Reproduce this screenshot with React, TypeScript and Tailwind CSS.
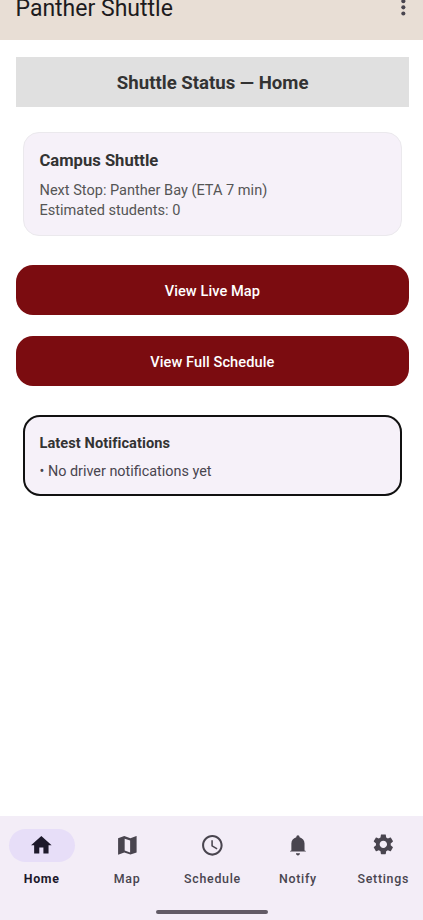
const items = [
  { label: "Home", d: "M10 20v-6h4v6h5v-8h3L12 3 2 12h3v8z", icon: "size-[24.7px]" },
  {
    label: "Map",
    d: "M20.8 2.9L15 5.1 9 3 3 5V21.1L9 18.9l6 2.1 6-2.1V2.9zM14.7 19l-5.3-1.9V5.5l5.3 1.8V19z",
    icon: "size-[24.7px]",
  },
  {
    label: "Schedule",
    d: "M11.99 2C6.47 2 2 6.48 2 12s4.47 10 9.99 10C17.52 22 22 17.52 22 12S17.52 2 11.99 2zM12 20c-4.42 0-8-3.58-8-8s3.58-8 8-8 8 3.58 8 8-3.58 8-8 8zM12.5 7H11v6l5.25 3.15.75-1.23-4.5-2.67z",
    icon: "size-[24.7px]",
  },
  {
    label: "Notify",
    d: "M12 22c1.1 0 2-.9 2-2h-4c0 1.1.9 2 2 2zM18.4 17.2V10.5c0-3-2-5.2-4.8-6.1C13.5 3.2 13 2.4 12 2.4s-1.5.8-1.6 2C7.6 5.3 5.6 7.5 5.6 10.5v6.7L4.3 17.8v.5h15.4v-.5z",
    icon: "size-[24.7px] -translate-x-[0.4px] -translate-y-[0.2px]",
  },
  {
    label: "Settings",
    d: "M19.14 12.94c.04-.3.06-.61.06-.94 0-.32-.02-.64-.07-.94l2.03-1.58c.18-.14.23-.41.12-.61l-1.92-3.32c-.12-.22-.37-.29-.59-.22l-2.39.96c-.5-.38-1.03-.7-1.62-.94l-.36-2.54c-.04-.24-.24-.41-.48-.41h-3.84c-.24 0-.43.17-.47.41l-.36 2.54c-.59.24-1.13.57-1.62.94l-2.39-.96c-.22-.08-.47 0-.59.22L2.74 8.87c-.12.21-.08.47.12.61l2.03 1.58c-.05.3-.09.63-.09.94s.02.64.07.94l-2.03 1.58c-.18.14-.23.41-.12.61l1.92 3.32c.12.22.37.29.59.22l2.39-.96c.5.38 1.03.7 1.62.94l.36 2.54c.05.24.24.41.48.41h3.84c.24 0 .44-.17.47-.41l.36-2.54c.59-.24 1.13-.56 1.62-.94l2.39.96c.22.08.47 0 .59-.22l1.92-3.32c.12-.22.07-.47-.12-.61l-2.01-1.58zM12 15.6c-1.98 0-3.6-1.62-3.6-3.6s1.62-3.6 3.6-3.6 3.6 1.62 3.6 3.6-1.62 3.6-3.6 3.6z",
    icon: "size-[24.7px] -translate-y-[1px]",
  },
];

export default function App() {
  return (
    <div className="flex h-[920px] w-full flex-col overflow-hidden bg-white font-[Roboto,sans-serif]">
      <header className="flex h-[40.3px] shrink-0 items-start justify-between bg-[#e8ded5] pl-[15.5px] pr-[7.5px]">
        <h1 className="-mt-[5px] text-[23px] leading-[28px] text-[#1d1b20]">Panther Shuttle</h1>
        <svg viewBox="0 0 24 24" className="-mt-[5.5px] size-[24.7px] text-[#49454f]" fill="currentColor">
          <circle cx="12" cy="6" r="2" />
          <circle cx="12" cy="12" r="2" />
          <circle cx="12" cy="18" r="2" />
        </svg>
      </header>

      <main className="flex flex-1 flex-col pl-[15.5px] pr-[13.8px] pt-[16.7px]">
        <h2 className="flex h-[50px] items-center justify-center bg-[#e0e0e0] pl-[0.6px] pt-[3px] text-[18.6px] font-bold text-[#333]">
          Shuttle Status — Home
        </h2>
        <section className="mx-[7.5px] mt-[25px] h-[104px] rounded-[16px] border border-[#ebe9ed] bg-[#f6f1f9] px-[15.5px] pt-[17.5px]">
          <h3 className="text-[16.6px] font-bold leading-[22px] text-[#333]">Campus Shuttle</h3>
          <p className="mt-[8.5px] text-[14.55px] leading-[20px] text-[#555]">
            Next Stop: Panther Bay (ETA 7 min)
            <br />
            Estimated students: 0
          </p>
        </section>
        <button className="mt-[29px] h-[50.5px] rounded-[17px] bg-[#7b0c10] pt-[3.5px] text-[14.6px] font-medium tracking-[0.07px] text-white">
          View Live Map
        </button>
        <button className="mt-[20.5px] h-[50.5px] rounded-[17px] bg-[#7b0c10] pt-[3.5px] text-[14.6px] font-medium tracking-[0.07px] text-white">
          View Full Schedule
        </button>
        <section className="mx-[7.5px] mt-[28.5px] h-[81px] rounded-[17px] border-2 border-[#111] bg-[#f6f1f9] px-[14.5px] pt-[16px]">
          <h3 className="text-[14.6px] font-bold leading-[20px] tracking-[0.07px] text-[#333]">Latest Notifications</h3>
          <p className="mt-[9px] text-[14.4px] leading-[20px] text-[#49454f]">• No driver notifications yet</p>
        </section>
      </main>

      <nav className="flex h-[104px] shrink-0 flex-col bg-[#f3edf7]">
        <div className="-ml-[1px] -mr-[3px] grid grid-cols-5 pt-[12.5px]">
          {items.map((item, i) => (
            <div key={item.label} className={i === 0 ? "flex flex-col items-center text-[#1d192b]" : "flex flex-col items-center text-[#49454f]"}>
              <div className={i === 0 ? "flex h-[33px] w-[66px] items-center justify-center rounded-full bg-[#e7def8]" : "flex h-[33px] w-[66px] items-center justify-center"}>
                <svg viewBox="0 0 24 24" className={item.icon} fill="currentColor">
                  <path d={item.d} />
                </svg>
              </div>
              <span className={i === 0 ? "mt-[8px] text-[12.4px] font-bold leading-[17px] tracking-[0.7px]" : "mt-[8px] text-[12.4px] font-medium leading-[17px] tracking-[0.7px]"}>
                {item.label}
              </span>
            </div>
          ))}
        </div>
        <div className="mx-auto mb-[6px] mt-auto h-[4px] w-[112px] rounded-full bg-[#625b66]" />
      </nav>
    </div>
  );
}
